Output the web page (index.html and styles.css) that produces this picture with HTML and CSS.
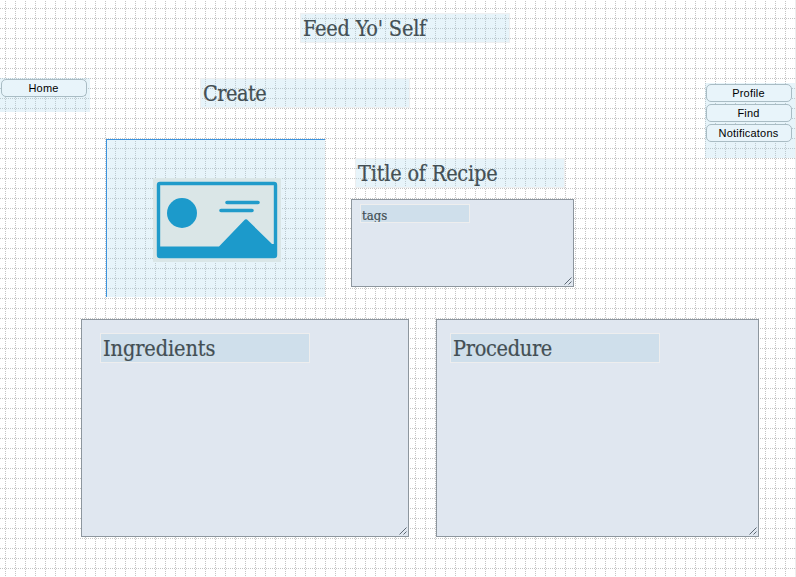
FILE: index.html
```html
<!DOCTYPE html>
<html lang="en">
<head>
<meta charset="utf-8">
<title>Feed Yo' Self</title>
<link rel="stylesheet" href="styles.css">
</head>
<body>
<header class="banner"><h1 class="label">Feed Yo' Self</h1></header>
<div class="top-row">
  <nav class="menu menu-home"><button>Home</button></nav>
  <h2 class="label create">Create</h2>
  <nav class="menu menu-user"><button>Profile</button><button>Find</button><button>Notificatons</button></nav>
</div>
<main>
  <section class="summary">
    <div class="photo">
      <svg width="128" height="84" viewBox="0 0 128 84">
        <rect width="128" height="84" fill="#dae6e7"/>
        <rect x="5.5" y="5.5" width="117" height="73" rx="1.5" fill="none" stroke="#209bca" stroke-width="3.4"/>
        <path d="M5 68.500H66L91 42.500Q93 40 95 42.500L119 66H123V79H5Z" fill="#1c9acb"/>
        <circle cx="29" cy="35" r="15" fill="#1c9acb"/>
        <path d="M74 24.500H105M68 32.500H99" stroke="#209bca" stroke-width="3.600" stroke-linecap="round"/>
      </svg>
    </div>
    <div class="details">
      <h2 class="label">Title of Recipe</h2>
      <div class="area tags"><span class="label small">tags</span><svg class="grip" width="8" height="8" viewBox="0 0 8 8"><path d="M0.500 7.500L7.500 .5M4.500 7.500L7.500 4.500"/></svg></div>
    </div>
  </section>
  <section class="writing">
    <div class="area ingredients"><h2 class="label">Ingredients</h2><svg class="grip" width="8" height="8" viewBox="0 0 8 8"><path d="M0.500 7.500L7.500 .5M4.500 7.500L7.500 4.500"/></svg></div>
    <div class="area procedure"><h2 class="label">Procedure</h2><svg class="grip" width="8" height="8" viewBox="0 0 8 8"><path d="M0.500 7.500L7.500 .5M4.500 7.500L7.500 4.500"/></svg></div>
  </section>
</main>
</body>
</html>
```
FILE: styles.css
```css
* { box-sizing: border-box; }
html { height: 100%; background: #fff; }
body {
  height: 577px;
  margin: 0;
  overflow: hidden;
  border-right: 1px solid #eee;
  background: url("data:image/svg+xml,%3Csvg xmlns='http://www.w3.org/2000/svg' width='10' height='10' shape-rendering='crispEdges'%3E%3Cpath d='M0 8h1v1H0zM2 8h1v1H2zM4 8h1v1H4zM6 8h1v1H6zM8 8h1v1H8zM5 1h1v1H5zM5 3h1v1H5zM5 5h1v1H5zM5 7h1v1H5zM5 9h1v1H5z' fill='%23c4c4c4'/%3E%3C/svg%3E") #fff;
  color: #434f54;
  font-family: "DejaVu Serif Condensed", "DejaVu Serif", Georgia, serif;
}
h1, h2 { margin: 0; }
.label {
  display: block;
  width: 210px;
  height: 30px;
  padding-left: 2px;
  border: 1px solid rgba(238, 238, 238, .9);
  background: rgba(168, 214, 235, .27);
  font-size: 21.5px;
  font-weight: 400;
  line-height: 29px;
  letter-spacing: -.2px;
  -webkit-text-stroke: .2px #434f54;
  white-space: nowrap;
}
.banner { padding: 13px 0 0 300px; height: 78px; }
.top-row { display: flex; align-items: flex-start; height: 61px; }
.create { margin-left: 110px; letter-spacing: -.5px; }
.menu {
  display: flex;
  flex-direction: column;
  gap: 2px;
  width: 90px;
  padding: 1px;
  background: rgba(168, 214, 235, .27);
}
.menu-home { height: 34px; }
.menu-user { height: 75px; margin: 5px 0 0 auto; }
button {
  width: 86px;
  height: 18px;
  padding: 0 1px 0 0;
  border: 1px solid #a9bcc4;
  border-radius: 5px;
  background: #e8f4fa;
  color: #000;
  font: 11px/15px "Liberation Sans", Arial, sans-serif;
  letter-spacing: .2px;
}
.summary { display: flex; height: 180px; padding-left: 106px; }
.photo {
  display: flex;
  width: 219px;
  height: 158px;
  padding: 38px 0 0 46px;
  border-top: 1px solid #3d94df;
  border-left: 1px solid #3d94df;
  background: rgba(168, 214, 235, .27);
}
.details { padding: 19px 0 0 26px; }
.details > .label { margin-left: 4px; }
.area {
  position: relative;
  border: 1px solid #8d969e;
  background: #e0e7f0;
}
.area .label { background: #cfdfeb; border-color: #eee; }
.tags { width: 223px; height: 88px; margin-top: 11px; padding: 4px 0 0 8px; }
.area .small { width: 110px; height: 19px; padding-left: 1px; font-size: 13px; line-height: 21px; letter-spacing: 0; overflow: hidden; }
.writing { display: flex; gap: 27px; padding-left: 81px; }
.ingredients { width: 328px; height: 218px; padding: 13px 0 0 18px; }
.ingredients .label { letter-spacing: -.1px; }
.procedure { width: 323px; height: 218px; padding: 13px 0 0 13px; }
.procedure .label { letter-spacing: -.3px; }
.grip { position: absolute; right: 1px; bottom: 1px; fill: none; stroke: #5d6874; stroke-width: 1; }
```
